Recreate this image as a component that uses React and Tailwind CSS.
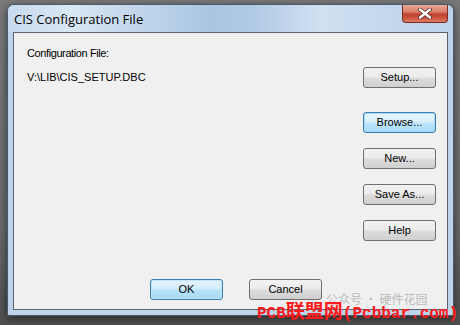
import React from "react";

const font = { fontFamily: '"Liberation Sans", Arial, sans-serif' };

function Btn({ children, focused, primary, className = "" }) {
  let look =
    "border-[#707070] bg-[linear-gradient(180deg,#f2f2f2_0%,#ebebeb_48%,#dddddd_52%,#cfcfcf_100%)]";
  if (focused)
    look =
      "border-[#3c7fb1] bg-[linear-gradient(180deg,#eaf6fd_0%,#d9f0fc_48%,#bee6fd_52%,#a7d9f5_100%)] shadow-[inset_0_0_0_1px_#a9d8f2]";
  if (primary)
    look =
      "border-[#3c7fb1] bg-[linear-gradient(180deg,#e5f4fc_0%,#d2ecfb_48%,#b7e1f9_52%,#a9dbf7_100%)] shadow-[inset_0_0_0_1px_#bfe6fa]";
  return (
    <div
      className={`flex h-[21px] w-[73px] items-center justify-center rounded-[3px] border text-[11px] text-black ${look} ${className}`}
      style={font}
    >
      {children}
    </div>
  );
}

function CloseX() {
  return (
    <svg width="14" height="11" viewBox="0 0 14 11">
      <path d="M2 1.5 L12 9.5 M12 1.5 L2 9.5" stroke="#5a2a24" strokeWidth="4" strokeLinecap="round" />
      <path d="M2 1.5 L12 9.5 M12 1.5 L2 9.5" stroke="#ffffff" strokeWidth="2.4" strokeLinecap="round" />
    </svg>
  );
}

export default function App() {
  return (
    <div className="relative h-[325px] w-[460px] overflow-hidden bg-[linear-gradient(180deg,#7a7a7a_0%,#6a6a6a_70%,#4e4e4e_100%)] pl-[7px] pt-[4px]">
      {/* window */}
      <div className="flex h-[312px] w-[447px] flex-col rounded-t-[7px] rounded-b-[2px] border border-[#4b5a6b] bg-[#bcd3ea] shadow-[0_2px_8px_rgba(0,0,0,0.55)]">
        {/* title bar */}
        <div className="flex h-[27px] items-start rounded-t-[6px] bg-[linear-gradient(90deg,#c6daee_0%,#d9e7f5_14%,#c3d7ec_28%,#a9c5e2_46%,#b2cbe5_56%,#d0e0f1_70%,#c4d8ed_85%,#bcd3ea_100%)]">
          <span className="ml-[6px] mt-[6px] text-[13px] leading-[16px] text-black" style={{ fontFamily: '"Open Sans", "Liberation Sans", sans-serif' }}>
            CIS Configuration File
          </span>
          <div className="ml-auto mr-[5px] flex h-[18px] w-[46px] items-center justify-center rounded-b-[4px] border border-t-0 border-[#7c2b22] bg-[linear-gradient(180deg,#e9a797_0%,#d9806c_40%,#c0402f_55%,#cf5a45_80%,#dc7d66_100%)]">
            <CloseX />
          </div>
        </div>
        {/* client */}
        <div className="mx-[5px] flex h-[278px] flex-col border border-[#5c6470] bg-[#f0f0f0]">
          <div className="flex flex-1">
            <div className="flex-1 pl-[13px] pt-[14px] text-[11px] leading-[13px] text-black" style={font}>
              <div className="tracking-[-0.4px]">Configuration File:</div>
              <div className="mt-[11px]">V:\LIB\CIS_SETUP.DBC</div>
            </div>
            <div className="mr-[11px] flex flex-col pt-[34px]">
              <Btn>Setup...</Btn>
              <Btn focused className="mt-[24px]">Browse...</Btn>
              <Btn className="mt-[15px]">New...</Btn>
              <Btn className="mt-[15px]">Save As...</Btn>
              <Btn className="mt-[15px]">Help</Btn>
            </div>
          </div>
          <div className="mb-[9px] flex gap-[26px] pl-[136px]">
            <Btn primary>OK</Btn>
            <Btn>Cancel</Btn>
          </div>
        </div>
      </div>

      {/* watermark */}
      <div
        className="absolute left-[326px] top-[292px] text-[12px] leading-[14px] text-[#bdbdbd]"
        style={{ fontFamily: '"Noto Sans CJK SC", sans-serif' }}
      >
        公众号 · 硬件花园
      </div>
      <div className="absolute left-[257px] top-[299px] flex items-baseline font-bold leading-[22px] text-[#ff1a1a]">
        <span className="text-[16px]" style={{ fontFamily: '"Liberation Mono", monospace' }}>PCB</span>
        <span className="text-[19px]" style={{ fontFamily: '"Noto Sans CJK SC", sans-serif' }}>联盟网</span>
        <span className="text-[16px]" style={{ fontFamily: '"Liberation Mono", monospace' }}>(Pcbbar.com)</span>
      </div>
    </div>
  );
}
